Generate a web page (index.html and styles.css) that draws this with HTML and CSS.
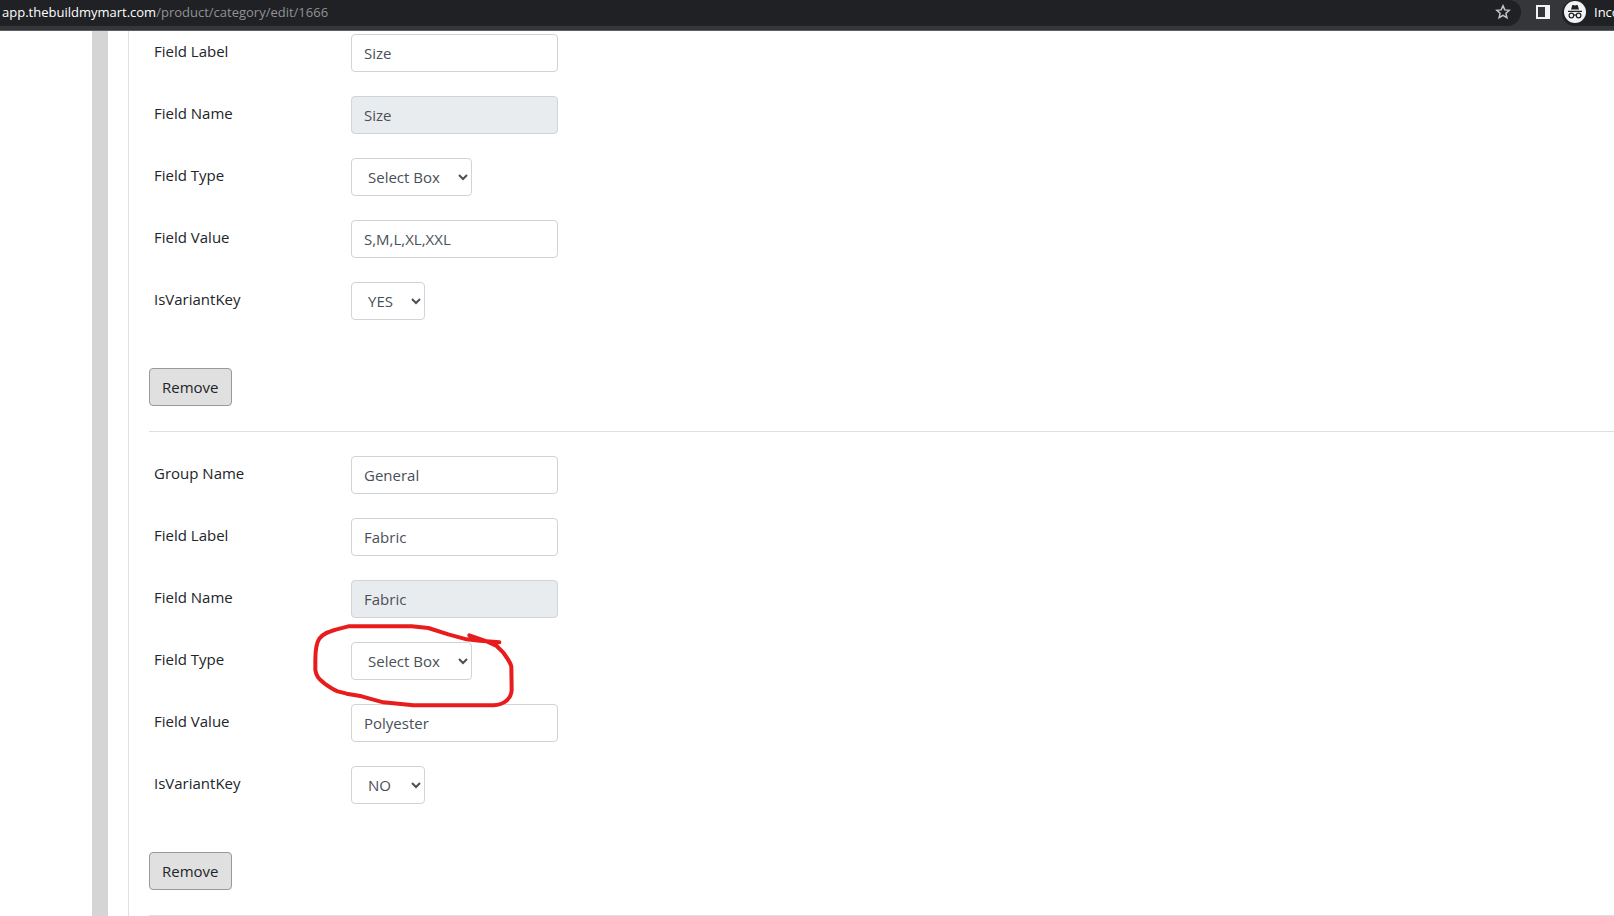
FILE: index.html
```
<!DOCTYPE html>
<html lang="en">
<head>
  <meta charset="UTF-8" />
  <meta name="viewport" content="width=device-width, initial-scale=1" />
  <title>Edit Category</title>
  <link rel="stylesheet" href="styles.css">
</head>
<body>
  <header class="toolbar">
    <div class="omnibox">
      <div class="url"><span class="host">app.thebuildmymart.com</span>/product/category/edit/1666</div>
      <button class="icon-btn" type="button" aria-label="Bookmark">
        <svg width="16" height="16" viewBox="0 0 16 16"><path d="M8 1.8l1.8 4.1 4.4.4-3.3 3 1 4.4L8 11.4l-3.9 2.3 1-4.4-3.3-3 4.4-.4z" fill="none" stroke="#c4c7c9" stroke-width="1.5"/></svg>
      </button>
    </div>
    <button class="icon-btn panel-btn" type="button" aria-label="Side panel">
      <svg width="14" height="14" viewBox="0 0 14 14"><path d="M0 0h14v14H0zM2 2v10h7V2z" fill="#f1f3f4" fill-rule="evenodd"/></svg>
    </button>
    <button class="profile" type="button">
      <svg width="22" height="22" viewBox="0 0 22 22">
        <circle cx="11" cy="11" r="11" fill="#f1f3f4"/>
        <path d="M7 8.6l1.2-4c.2-.5.6-.6 1-.5l1.8.5 1.8-.5c.4-.1.8 0 1 .5l1.2 4z" fill="#202124"/>
        <path d="M4 10.3h14" stroke="#202124" stroke-width="1.3"/>
        <g fill="none" stroke="#202124" stroke-width="1.2"><circle cx="7.4" cy="14.5" r="2.3"/><circle cx="14.6" cy="14.5" r="2.3"/><path d="M9.7 14.2q1.3-.8 2.6 0"/></g>
      </svg>
      <span>Incognito</span>
    </button>
  </header>

  <div class="page">
    <div class="sidebar"></div>
    <main class="content">
      <section class="group">
        <div class="field">
          <label for="label1">Field Label</label>
          <div class="control"><input class="form-control" id="label1" type="text" value="Size"></div>
        </div>
        <div class="field">
          <label for="name1">Field Name</label>
          <div class="control"><input class="form-control" id="name1" type="text" value="Size" readonly></div>
        </div>
        <div class="field">
          <label for="type1">Field Type</label>
          <div class="control"><select class="form-control type-select" id="type1"><option>Select Box</option></select></div>
        </div>
        <div class="field">
          <label for="value1">Field Value</label>
          <div class="control"><input class="form-control" id="value1" type="text" value="S,M,L,XL,XXL"></div>
        </div>
        <div class="field">
          <label for="variant1">IsVariantKey</label>
          <div class="control"><select class="form-control variant-select" id="variant1"><option>YES</option><option>NO</option></select></div>
        </div>
        <button class="btn-remove" type="button">Remove</button>
      </section>

      <section class="group">
        <div class="field">
          <label for="group2">Group Name</label>
          <div class="control"><input class="form-control" id="group2" type="text" value="General"></div>
        </div>
        <div class="field">
          <label for="label2">Field Label</label>
          <div class="control"><input class="form-control" id="label2" type="text" value="Fabric"></div>
        </div>
        <div class="field">
          <label for="name2">Field Name</label>
          <div class="control"><input class="form-control" id="name2" type="text" value="Fabric" readonly></div>
        </div>
        <div class="field">
          <label for="type2">Field Type</label>
          <div class="control">
            <select class="form-control type-select" id="type2"><option>Select Box</option></select>
            <!-- hand drawn circle round the select -->
            <svg class="marker" width="230" height="110" viewBox="0 0 690 330">
              <path d="M598 97L540 92L500 88L445 73L385 54L335 49H145L110 58C82 66 67 72 58 86C49 99 46 120 46 150V180C50 205 62 210 73 220C88 231 100 239 113 244L140 251L185 259L250 277L340 286H580C612 284 634 266 635 240L634 170C631 155 618 140 610 128L590 108L562 95L508 76"/>
            </svg>
          </div>
        </div>
        <div class="field">
          <label for="value2">Field Value</label>
          <div class="control"><input class="form-control" id="value2" type="text" value="Polyester"></div>
        </div>
        <div class="field">
          <label for="variant2">IsVariantKey</label>
          <div class="control"><select class="form-control variant-select" id="variant2"><option>NO</option><option>YES</option></select></div>
        </div>
        <button class="btn-remove" type="button">Remove</button>
      </section>
    </main>
  </div>
</body>
</html>
```
FILE: styles.css
```
* {
  box-sizing: border-box;
}
body {
  margin: 0;
  min-height: 100vh;
  display: flex;
  flex-direction: column;
  overflow-x: hidden;
  background: #fff;
  color: #212529;
  font-family: "Segoe UI", "Open Sans", "Noto Sans", sans-serif;
  font-size: 15px;
  line-height: 24px;
}
button {
  font: inherit;
  cursor: pointer;
}

/* browser bar */
.toolbar {
  display: flex;
  align-items: flex-start;
  height: 31px;
  background: #35363a;
  border-bottom: 1px solid #5b5c60;
  overflow: hidden;
}
.omnibox {
  flex: 1;
  display: flex;
  align-items: center;
  justify-content: space-between;
  height: 26px;
  padding: 0 10px 2px 2px;
  background: #202124;
  border-radius: 0 12px 14px 0;
}
.url {
  color: #8f9296;
  font-size: 13px;
}
.host {
  color: #fff;
}
.icon-btn {
  display: flex;
  padding: 0;
  border: 0;
  background: none;
}
.panel-btn {
  margin: 5px 12px 0 15px;
}
.profile {
  display: flex;
  align-items: center;
  gap: 8px;
  width: 52px;
  height: 26px;
  padding: 0 0 2px 2px;
  border: 0;
  border-radius: 14px 0 0 14px;
  background: #202124;
  color: #fff;
  font-size: 13px;
  overflow: hidden;
}
.profile svg {
  flex: none;
}

/* form */
.page {
  flex: 1;
  display: flex;
}
.sidebar {
  flex: none;
  width: 108px;
  margin-right: 20px;
  border-right: 16px solid #d5d5d5;
}
.content {
  flex: 1;
  padding: 3px 0 0 20px;
  border-left: 1px solid #dee2e6;
}
.group {
  padding-bottom: 25px;
  border-bottom: 1px solid #dedfe0;
}
.group + .group {
  padding-top: 24px;
}
.field {
  display: flex;
  margin-bottom: 24px;
  padding-left: 5px;
}
.field label {
  width: 197px;
  padding-top: 5px;
}
.control {
  position: relative;
}
.form-control {
  display: block;
  width: 207px;
  height: 38px;
  padding: 6px 12px;
  border: 1px solid #ced4da;
  border-radius: 4px;
  background-color: #fff;
  color: #495057;
  font: inherit;
}
.form-control:read-only:not(select) {
  background-color: #e9ecef;
}
.type-select {
  width: 121px;
}
.variant-select {
  width: 74px;
}
select.form-control {
  padding-right: 0;
}
.btn-remove {
  display: block;
  height: 38px;
  margin-top: 48px;
  padding: 6px 12px;
  border: 1px solid #999;
  border-radius: 4px;
  background: #e0e0e0;
  color: #212529;
}
.marker {
  position: absolute;
  left: -51px;
  top: -32px;
  z-index: 1;
  pointer-events: none;
}
.marker path {
  fill: none;
  stroke: #e81c1c;
  stroke-width: 12;
  stroke-linecap: round;
  stroke-linejoin: round;
}
```
